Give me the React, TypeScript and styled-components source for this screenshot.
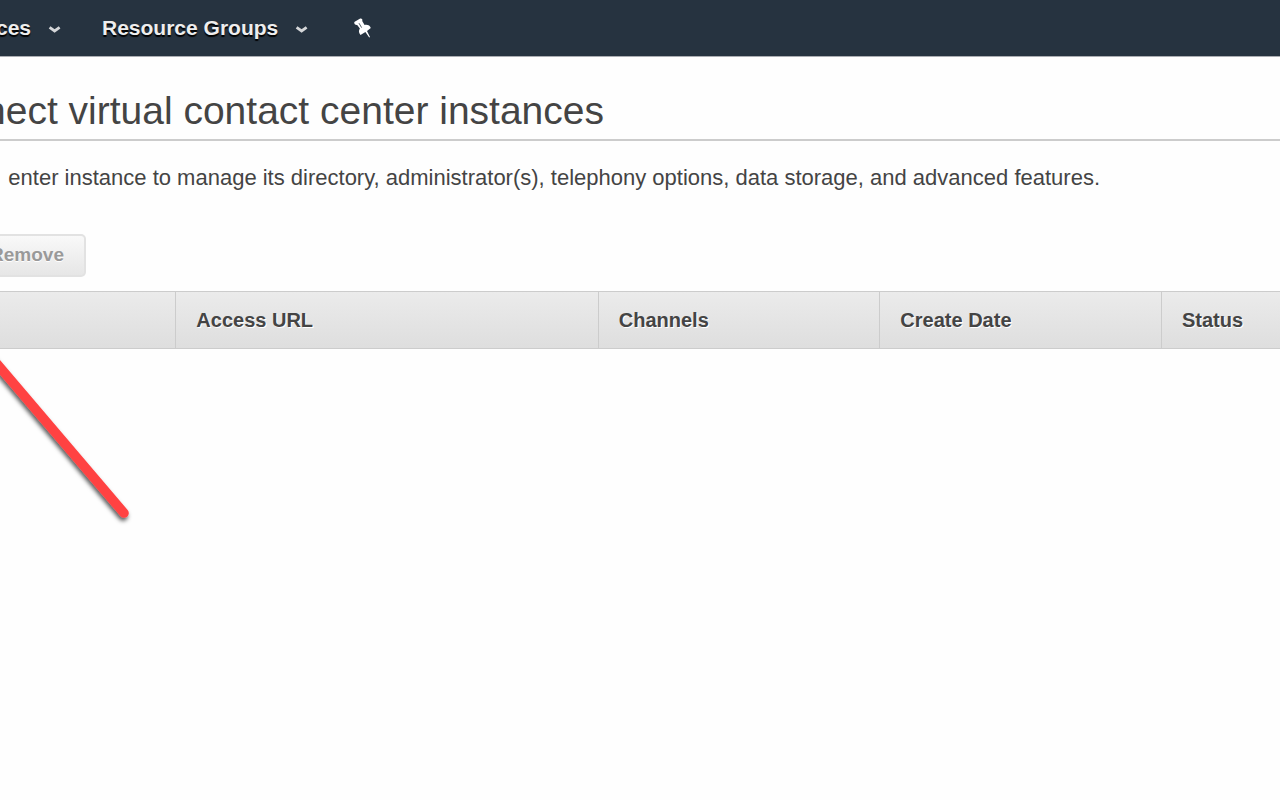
import React from "react";
import styled, { createGlobalStyle } from "styled-components";

const GlobalStyle = createGlobalStyle`
  * { box-sizing: border-box; }
  body {
    margin: 0;
    background: #fefefe;
    color: #444;
    font-family: "Liberation Sans", Arial, sans-serif;
    overflow-x: hidden;
  }
`;

const Page = styled.div`
  position: relative;
  overflow: hidden;
  min-height: 100vh;
`;

const NavBar = styled.nav`
  display: flex;
  align-items: center;
  height: 57px;
  background: #263340;
  border-bottom: 1px solid #aaadb2;
`;

const NavButton = styled.button<{ $clipped?: boolean }>`
  display: flex;
  align-items: center;
  justify-content: flex-end;
  gap: 16px;
  width: ${(p) => (p.$clipped ? "62px" : "auto")};
  margin: 0 40px 0 0;
  padding: 0;
  border: 0;
  background: none;
  color: #eee;
  font: bold 21px/24px "Liberation Sans", Arial, sans-serif;
  text-shadow: 0 2px 1px #000;
  white-space: nowrap;

  svg {
    flex-shrink: 0;
    margin-top: 4px;
  }
`;

const PinButton = styled.button`
  display: flex;
  margin: 0 0 0 4px;
  padding: 0;
  border: 0;
  background: none;
`;

const ClippedLine = styled.div<{ $width: number }>`
  display: flex;
  justify-content: flex-end;
  width: ${(p) => p.$width}px;
  white-space: nowrap;
`;

const Header = styled.header`
  padding: 30px 0 4px;
  border-bottom: 2px solid #ccc;
`;

const Title = styled.h1`
  margin: 0;
  font-size: 39px;
  line-height: 48px;
  font-weight: normal;
`;

const Intro = styled.p`
  margin: 0;
  padding: 24px 0;
  font-size: 22px;
  line-height: 26px;
`;

const Toolbar = styled.div`
  display: flex;
  padding: 19px 0 14px;
`;

const RemoveButton = styled.button`
  display: flex;
  align-items: center;
  justify-content: flex-end;
  width: 86px;
  height: 43px;
  padding: 0 20px 1px 0;
  border: 2px solid #e2e2e2;
  border-left: 0;
  border-radius: 0 5px 5px 0;
  background: linear-gradient(#f9f9f9, #e6e6e6);
  color: #999;
  font: bold 19px/24px "Liberation Sans", Arial, sans-serif;
  text-shadow: 0 1px 0 #fff;
`;

const Table = styled.table`
  width: 100%;
  table-layout: fixed;
  border-collapse: separate;
  border-spacing: 0;
`;

const HeadCell = styled.th<{ $width?: string }>`
  width: ${(p) => p.$width ?? "auto"};
  height: 58px;
  padding: 0 20px;
  border: 1px solid #ccc;
  border-width: 1px 0 1px 1px;
  background: linear-gradient(#ebebeb, #dedede);
  font-size: 20px;
  line-height: 24px;
  text-align: left;
  text-shadow: 1px 1px 0 #fff;

  &:first-child { border-left: 0; }
`;

const Pointer = styled.svg`
  position: absolute;
  top: 340px;
  left: 0;
  pointer-events: none;
`;

const Chevron = () => (
  <svg width="15" height="10" viewBox="0 0 15 10" aria-hidden="true">
    <path d="M2.6 2.4l5 3.6 5-3.6" fill="none" stroke="#d5d7d9" strokeWidth="2.8" />
  </svg>
);

const Pin = () => (
  <svg width="20" height="22" viewBox="0 0 20 22" aria-hidden="true">
    <path
      d="M7.2 1.6c1.6-.4 2.7 1 2 2.5l2.4 3.8c2.9-.6 5.6.6 6.2 3.2L14 13.9l3 6.1-.8.4-3.8-5.5-4.9 3c-1.9-1.9-2-4.5-.6-6.4L4.2 8C2.4 8.2.9 6.8 1.3 5z"
      fill="#fff"
    />
    <path d="M6 6.2l2.6 4.4" stroke="#263340" strokeWidth="0.8" fill="none" />
  </svg>
);

const columns: { label: string; width?: string }[] = [
  { label: "", width: "13.7%" },
  { label: "Access URL", width: "33%" },
  { label: "Channels", width: "22%" },
  { label: "Create Date", width: "22%" },
  { label: "Status" },
];

export default function App() {
  return (
    <Page>
      <GlobalStyle />
      <NavBar>
        <NavButton $clipped>
          ces
          <Chevron />
        </NavButton>
        <NavButton>
          Resource Groups
          <Chevron />
        </NavButton>
        <PinButton aria-label="Pin">
          <Pin />
        </PinButton>
      </NavBar>
      <main>
        <Header>
          <ClippedLine $width={604}>
            <Title>nect virtual contact center instances</Title>
          </ClippedLine>
        </Header>
        <ClippedLine $width={1100}>
          <Intro>
            enter instance to manage its directory, administrator(s), telephony
            options, data storage, and advanced features.
          </Intro>
        </ClippedLine>
        <Toolbar>
          <RemoveButton disabled>Remove</RemoveButton>
        </Toolbar>
        <Table>
          <thead>
            <tr>
              {columns.map((c) => (
                <HeadCell key={c.label} $width={c.width} scope="col">
                  {c.label}
                </HeadCell>
              ))}
            </tr>
          </thead>
        </Table>
      </main>
      <Pointer width="150" height="200" viewBox="0 0 150 200" aria-hidden="true">
        <defs>
          <filter id="shade" x="-20%" y="-20%" width="140%" height="140%">
            <feDropShadow dx="-1" dy="3" stdDeviation="2" floodOpacity="0.65" />
          </filter>
        </defs>
        <path
          d="M-20 4L124 173"
          stroke="#ff4343"
          strokeWidth="9.6"
          strokeLinecap="round"
          filter="url(#shade)"
        />
      </Pointer>
    </Page>
  );
}
